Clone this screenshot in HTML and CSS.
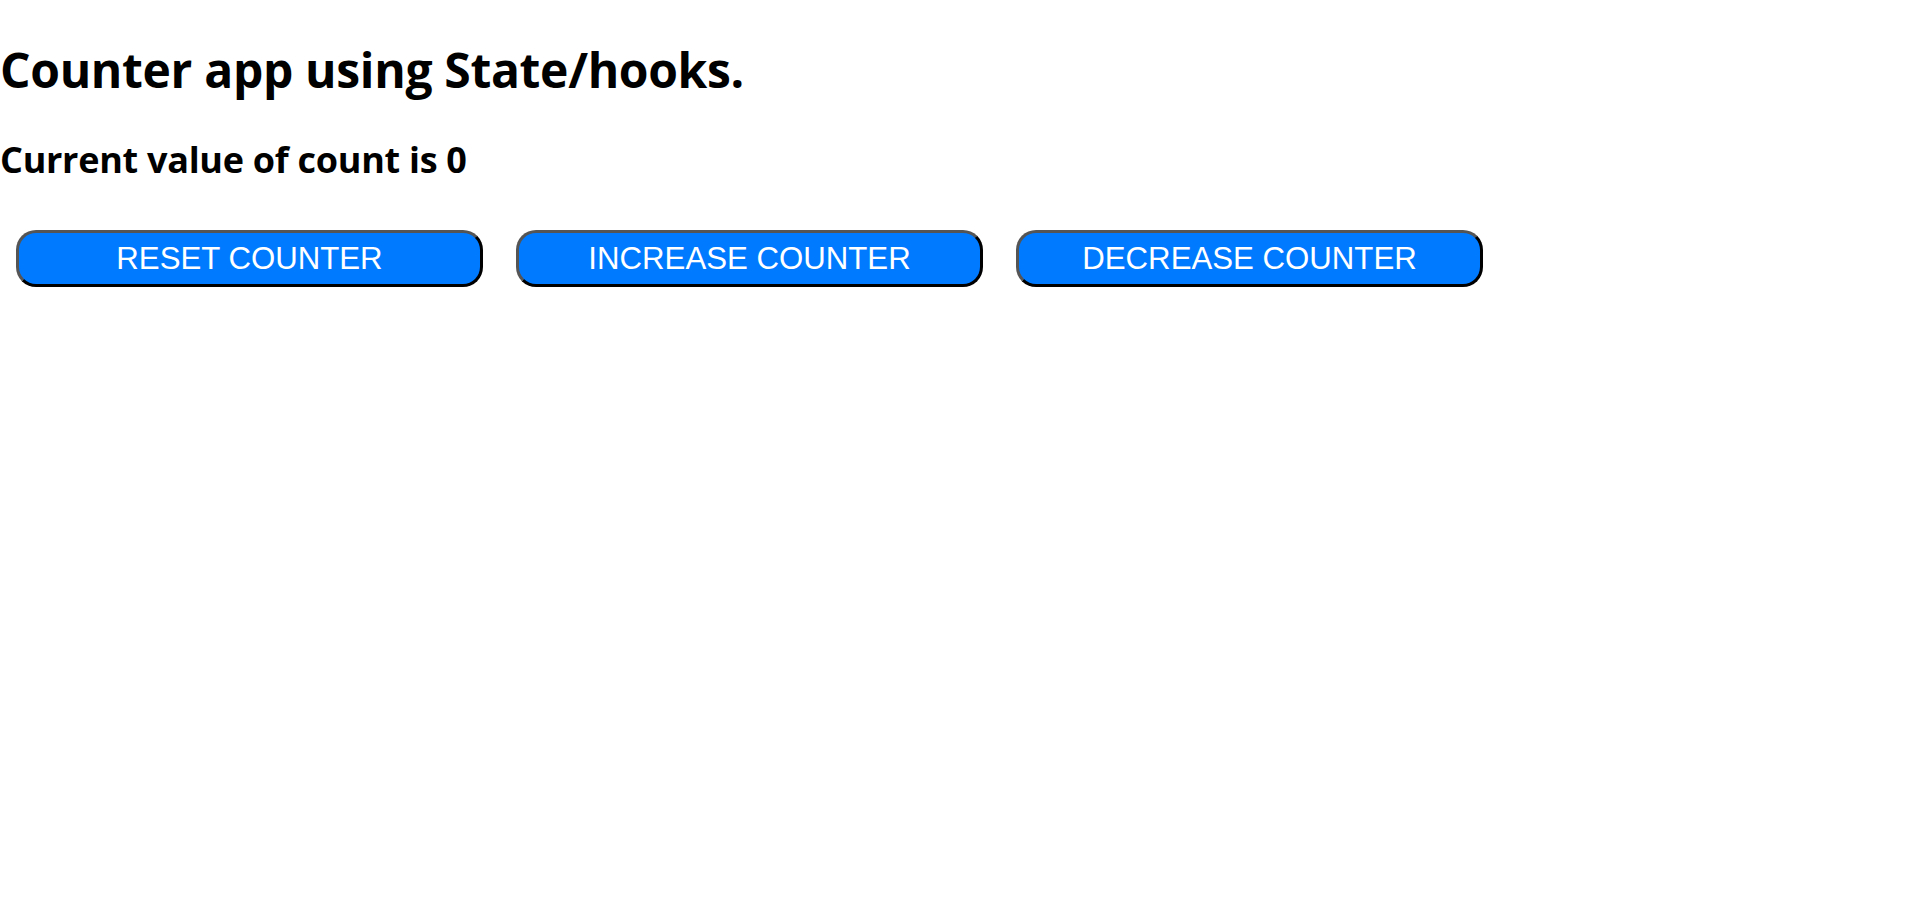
FILE: index.html
```html
<!DOCTYPE html>
<html lang="en">
<head>
<meta charset="utf-8">
<title>Counter app</title>
<link rel="stylesheet" href="styles.css">
</head>
<body>
<div class="app">
  <h1 class="title">Counter app using State/hooks.</h1>
  <h2 class="value">Current value of count is 0</h2>
  <div class="actions">
    <button class="btn">RESET COUNTER</button>
    <button class="btn">INCREASE COUNTER</button>
    <button class="btn">DECREASE COUNTER</button>
  </div>
</div>
</body>
</html>
```
FILE: styles.css
```css
html, body {
  margin: 0;
  padding: 0;
  background: #fff;
}
.app {
  display: flex;
  flex-direction: column;
  font-family: "Open Sans", "Noto Sans", sans-serif;
  color: #000;
}
.title {
  margin: 41px 0 0;
  font-size: 48px;
  line-height: 58px;
  font-weight: 700;
  letter-spacing: -0.33px;
}
.value {
  margin: 39px 0 0;
  font-size: 36px;
  line-height: 44px;
  font-weight: 700;
  letter-spacing: -0.28px;
}
.actions {
  display: flex;
  gap: 33px;
  margin: 48px 0 0 16px;
}
.btn {
  box-sizing: border-box;
  width: 467px;
  height: 57px;
  padding: 0;
  background: #007aff;
  color: #fff;
  font-family: "Liberation Sans", Arial, sans-serif;
  font-size: 31.2px;
  border-style: solid;
  border-width: 3px;
  border-color: #555 #000 #000 #555;
  border-radius: 20px;
  cursor: pointer;
}
```
